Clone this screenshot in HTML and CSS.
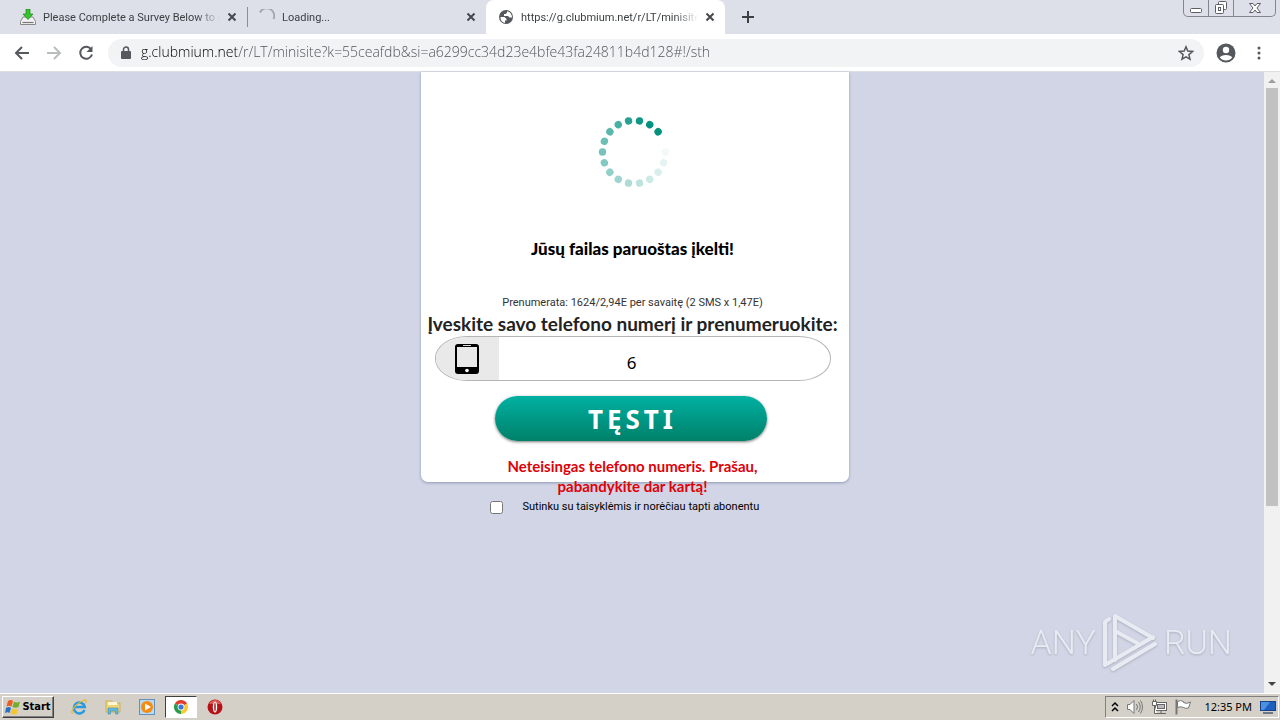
FILE: index.html
```html
<!DOCTYPE html>
<html lang="lt">
  <head>
    <meta charset="UTF-8" />
    <meta name="viewport" content="width=device-width, initial-scale=1.0" />
    <title>g.clubmium.net</title>
    <link rel="stylesheet" href="styles.css">
  </head>
  <body>
    <!-- tabs -->
    <header class="tab-strip">
      <div class="tab">
        <svg class="favicon" viewBox="0 0 16 16">
          <path d="M3 8h10l2.500 4.500v3H.500v-3z" fill="#f1f1f1" stroke="#888" />
          <path d="M2.500 13.500h11" stroke="#777" stroke-width="1.200" />
          <path d="M6 0h4v5h3l-5 5.500L3 5h3z" fill="#35c52d" stroke="#168512" stroke-width=".7" />
        </svg>
        <a class="tab-title" href="#survey">Please Complete a Survey Below to C</a>
        <button class="tab-close" aria-label="Close tab"><svg viewBox="0 0 10 10"><path d="M1.500 1.500l7 7m0-7l-7 7" /></svg></button>
      </div>
      <div class="tab divided">
        <svg class="favicon" viewBox="0 0 16 16"><path d="M1 3.500A7 7 0 0 1 14.500 10" fill="none" stroke="#a3a5a9" stroke-width="1.800" /></svg>
        <a class="tab-title" href="#loading">Loading...</a>
        <button class="tab-close" aria-label="Close tab"><svg viewBox="0 0 10 10"><path d="M1.500 1.500l7 7m0-7l-7 7" /></svg></button>
      </div>
      <div class="tab active">
        <svg class="favicon" viewBox="0 0 16 16">
          <circle cx="8" cy="8" r="7" fill="#55585d" />
          <path d="M2.500 8h4l2 2v1.500H7V14C4 13.500 2.300 11 2.500 8zM9 2.200v1.600L7.500 5H6v2h4l1.500 1.500H14C14 5 12 2.800 9 2.200z" fill="#fff" />
        </svg>
        <a class="tab-title" href="#minisite">https://g.clubmium.net/r/LT/minisite?</a>
        <button class="tab-close" aria-label="Close tab"><svg viewBox="0 0 10 10"><path d="M1.500 1.500l7 7m0-7l-7 7" /></svg></button>
      </div>
      <button class="new-tab" aria-label="New tab"><svg viewBox="0 0 12 12"><path d="M6 0v12M0 6h12" /></svg></button>
      <div class="window-buttons">
        <button aria-label="Minimize"><svg width="14" height="14" viewBox="0 0 14 14"><rect x="1.500" y="7.500" width="11" height="4" rx="1" /></svg></button>
        <button aria-label="Restore"><svg width="14" height="14" viewBox="0 0 14 14"><rect x="4.500" y=".5" width="8" height="8" rx="1" /><rect x="1.500" y="3.500" width="8" height="9" rx="1" /><rect x="4.500" y="6.500" width="2" height="3" /></svg></button>
        <button class="wide" aria-label="Close"><svg width="14" height="14" viewBox="0 0 14 14"><path d="M1.500 2.500h3.500l2 2.500 2-2.500h3.500L9 7l3.500 4.500H9L7 9l-2 2.500H1.500L5 7z" /></svg></button>
      </div>
    </header>

    <!-- toolbar -->
    <nav class="toolbar">
      <button class="nav-button" aria-label="Back"><svg viewBox="0 0 16 16"><path d="M15 8H2m6-6L2 8l6 6" /></svg></button>
      <button class="nav-button disabled" aria-label="Forward" disabled><svg viewBox="0 0 16 16"><path d="M1 8h13M8 2l6 6-6 6" /></svg></button>
      <button class="nav-button" aria-label="Reload"><svg viewBox="0 0 16 16"><path d="M13.300 4.500A6 6 0 1 0 14 9.500" /><path d="M14.500 1v6h-6z" fill="#55585d" stroke="none" /></svg></button>
      <div class="address-bar">
        <svg class="lock" viewBox="0 0 10 13"><path d="M2.500 6V3.500a2.500 2.500 0 0 1 5 0V6" fill="none" stroke="#55585d" stroke-width="1.500" /><rect y="5" width="10" height="8" rx="1" fill="#55585d" /></svg>
        <input class="url" type="text" aria-label="Address" value="g.clubmium.net/r/LT/minisite?k=55ceafdb&amp;si=a6299cc34d23e4bfe43fa24811b4d128#!/sth">
        <button class="star" aria-label="Bookmark"><svg viewBox="0 0 16 16"><path d="M8 1.800l1.800 4.300 4.700.4-3.600 3.100 1.100 4.600L8 11.800l-4 2.400 1.100-4.600L1.500 6.500l4.700-.4z" /></svg></button>
      </div>
      <button class="profile" aria-label="Profile">
        <svg viewBox="0 0 20 20"><circle cx="10" cy="10" r="9.500" fill="#55585d" /><circle cx="10" cy="7" r="3.200" fill="#fff" /><path d="M3.800 14.500C5 11 15 11 16.200 14.500 13.500 18.500 6.500 18.500 3.800 14.500z" fill="#fff" /></svg>
      </button>
      <button class="more" aria-label="Menu"><svg viewBox="0 0 4 14"><circle cx="2" cy="2" r="1.500" /><circle cx="2" cy="7" r="1.500" /><circle cx="2" cy="12" r="1.500" /></svg></button>
    </nav>

    <div class="viewport">
      <main class="page">
        <form class="subscribe">
          <div class="card">
            <svg class="spinner" viewBox="-36 -36 72 72" fill="#00917f">
              <circle r="3.700" cx="31.500" transform="rotate(-40)" />
              <circle r="3.700" cx="31.500" transform="rotate(-60)" />
              <circle r="3.700" cx="31.500" transform="rotate(-80)" opacity=".94" />
              <circle r="3.700" cx="31.500" transform="rotate(-100)" opacity=".85" />
              <circle r="3.700" cx="31.500" transform="rotate(-120)" opacity=".72" />
              <circle r="3.700" cx="31.500" transform="rotate(-140)" opacity=".65" />
              <circle r="3.700" cx="31.500" transform="rotate(-160)" opacity=".58" />
              <circle r="3.700" cx="31.500" transform="rotate(180)" opacity=".54" />
              <circle r="3.700" cx="31.500" transform="rotate(160)" opacity=".49" />
              <circle r="3.700" cx="31.500" transform="rotate(140)" opacity=".43" />
              <circle r="3.700" cx="31.500" transform="rotate(120)" opacity=".38" />
              <circle r="3.700" cx="31.500" transform="rotate(100)" opacity=".32" />
              <circle r="3.700" cx="31.500" transform="rotate(80)" opacity=".26" />
              <circle r="3.700" cx="31.500" transform="rotate(60)" opacity=".2" />
              <circle r="3.700" cx="31.500" transform="rotate(40)" opacity=".15" />
              <circle r="3.700" cx="31.500" transform="rotate(20)" opacity=".1" />
              <circle r="3.700" cx="31.500" opacity=".05" />
            </svg>
            <h1>Jūsų failas paruoštas įkelti!</h1>
            <p class="price">Prenumerata: 1624/2,94E per savaitę (2 SMS x 1,47E)</p>
            <label class="phone-label" for="phone">Įveskite savo telefono numerį ir prenumeruokite:</label>
            <div class="phone-field">
              <span class="phone-icon">
                <svg viewBox="0 0 26 32"><rect x="1" y="1" width="24" height="30" rx="3" fill="#000" /><rect x="3" y="4" width="20" height="20" fill="#e9e9e9" /><path d="M9 2.500h8" stroke="#ddd" /><circle cx="13" cy="27.500" r="1.800" fill="#fff" /></svg>
              </span>
              <input id="phone" type="tel" value="6">
            </div>
            <button class="continue" type="button">TĘSTI</button>
            <p class="error">Neteisingas telefono numeris. Prašau, pabandykite dar kartą!</p>
          </div>
          <div class="agree">
            <input type="checkbox" id="agree">
            <label for="agree">Sutinku su taisyklėmis ir norėčiau tapti abonentu</label>
          </div>
        </form>
        <div class="watermark">
          <span>ANY</span>
          <svg viewBox="0 0 58 62"><path d="M8 8L4 11v43l48-28M14 5v44M14 5l38 22M14 20l22 12M12 58l42-25" /></svg>
          <span>RUN</span>
        </div>
      </main>
      <div class="scrollbar">
        <svg viewBox="0 0 16 16"><path d="M4 11l4-4 4 4z" fill="#9d9d9d" /></svg>
        <div class="track"><div class="thumb"></div></div>
        <svg viewBox="0 0 16 16"><path d="M4 5l4 4 4-4z" fill="#444" /></svg>
      </div>
    </div>

    <!-- taskbar -->
    <footer class="taskbar">
      <button class="start">
        <svg viewBox="0 0 16 16"><path d="M3 2q3-2 5 0L6.500 7.500Q4 6 1.500 7.500z" fill="#ee5b23" /><path d="M9 2.500q3 2 6 0l-1.500 5.500q-3 1.500-6 0z" fill="#75ad2a" /><path d="M1 9q3-2 5 0L4.500 14Q2.500 12.500 0 14z" fill="#2671c8" /><path d="M7 9.500q3 2 6 0L11.500 15q-3 1-6-.5z" fill="#f6c42c" /></svg>
        Start
      </button>
      <button class="task" aria-label="Internet Explorer"><svg viewBox="0 0 16 16"><path d="M13.500 11A5.500 5.500 0 1 1 13.800 8H4" fill="none" stroke="#2a9ae0" stroke-width="2.500" /><path d="M2 14.500C-2 14 5 4 13 1.200c3-.8 2.500 1.300 1.500 3" fill="none" stroke="#e8b82a" stroke-width="1.200" /></svg></button>
      <button class="task" aria-label="Explorer"><svg viewBox="0 0 16 16"><path d="M1 2h6l1 2h7v9H1z" fill="#f0d478" stroke="#c9a441" stroke-width=".7" /><path d="M3 3h9v3H3z" fill="#fff8d8" /><path d="M3 15V9h10v6h-2.500v-3h-5v3z" fill="#62b9df" stroke="#3e8eb4" stroke-width=".6" /></svg></button>
      <button class="task" aria-label="Media Player"><svg viewBox="0 0 16 16"><rect x=".5" y=".5" width="15" height="15" fill="#b9d9f1" stroke="#6592bd" /><circle cx="8" cy="8" r="6" fill="#f58b10" /><path d="M6 4.500l6 3.500-6 3.500z" fill="#fff" /></svg></button>
      <button class="task pressed" aria-label="Chrome"><svg viewBox="0 0 16 16"><path d="M8 8L1.900 4.500A7 7 0 0 1 14.100 4.500z" fill="#e33b2e" /><path d="M8 8l6.100-3.500A7 7 0 0 1 8 15z" fill="#fcc934" /><path d="M8 8v7A7 7 0 0 1 1.900 4.500z" fill="#2b9b4b" /><circle cx="8" cy="8" r="3.400" fill="#fff" /><circle cx="8" cy="8" r="2.600" fill="#3878dc" /></svg></button>
      <button class="task" aria-label="Opera"><svg viewBox="0 0 16 16"><circle cx="8" cy="8" r="7.500" fill="#b51218" /><path d="M2 5a6.500 6.500 0 0 1 12 0z" fill="#dc5551" /><ellipse cx="8" cy="8" rx="2.200" ry="5.500" fill="#fff" /><ellipse cx="8" cy="8" rx=".7" ry="4.500" fill="#8d0b10" /></svg></button>
      <div class="tray">
        <svg class="chevrons" viewBox="0 0 8 12"><path d="M1 5l3-3 3 3M1 10l3-3 3 3" /></svg>
        <svg viewBox="0 0 16 16" fill="#fff" stroke="#777"><path d="M.5 5.500H3L7 1.500v13L3 10.500H.500z" /><path d="M9.500 5q2 3 0 6M11.500 3q3.500 5 0 10M13.500 1.500q4 6.500 0 13" fill="none" /></svg>
        <svg viewBox="0 0 16 16" fill="#fff" stroke="#666"><rect x="4.500" y="3.500" width="11" height="8" /><rect x="6.500" y="5.500" width="7" height="4" fill="#bbb" /><path d="M6 14.500h9M10 12v2" /><path d="M1.500 2.500h4v4h-4zM3.500 6.500v8H6M2.500.5v2M4.500.5v2" /></svg>
        <svg viewBox="0 0 16 16" fill="#fff" stroke="#777"><path d="M2.500 2.500q3-2 6 0v1q3 2 7-.5l-2 6q-3 1-5-.5-3-1.500-6 0z" /><path d="M1.500.5v15" stroke-width="2" /></svg>
        <time>12:35 PM</time>
        <svg viewBox="0 0 16 16"><rect x=".5" y="2.500" width="15" height="9" fill="#1f5fc0" stroke="#15408b" /><path d="M1 3h9L4 11H1z" fill="#4b91e2" /><path d="M3 14h10" stroke="#6d7785" stroke-width="2" /></svg>
      </div>
    </footer>
  </body>
</html>
```

FILE: styles.css
```css
* {
  box-sizing: border-box;
}
body {
  font-family: Roboto, "Noto Sans", sans-serif;
  margin: 0;
  display: flex;
  flex-direction: column;
  height: 100vh;
  overflow: hidden;
  color: #000;
}
button {
  display: flex;
  align-items: center;
  justify-content: center;
  padding: 0;
  border: none;
  background: none;
  font-family: inherit;
}
svg {
  flex-shrink: 0;
}

/* tabs */
.tab-strip {
  display: flex;
  flex: none;
  height: 34px;
  padding-left: 8px;
  background-color: #dde0e8;
}
.tab {
  display: flex;
  align-items: center;
  width: 239px;
  padding: 0 7px 0 12px;
}
.tab.divided {
  background: linear-gradient(#8b8e94, #8b8e94) 0 50% / 1px 20px no-repeat;
}
.tab.active {
  background-color: #fff;
  border-radius: 8px 8px 0 0;
}
.favicon {
  width: 16px;
  height: 16px;
}
.tab-title {
  flex: 1;
  min-width: 0;
  margin: 0 4px 0 7px;
  overflow: hidden;
  white-space: nowrap;
  color: #3c4043;
  font-size: 11px;
  text-decoration: none;
  -webkit-mask-image: linear-gradient(to left, transparent, #000 24px);
}
.tab-close {
  width: 16px;
  height: 16px;
}
.tab-close svg {
  width: 10px;
  height: 10px;
}
.tab-close path {
  stroke: #45484d;
  stroke-width: 2;
}
.new-tab {
  width: 46px;
}
.new-tab svg {
  width: 12px;
  height: 12px;
}
.new-tab path {
  stroke: #3c4043;
  stroke-width: 2;
}
.window-buttons {
  display: flex;
  height: 17px;
  margin-left: auto;
  margin-right: 4px;
  border: 1px solid #83868d;
  border-top: none;
  border-radius: 0 0 5px 5px;
}
.window-buttons button {
  width: 25px;
  border-right: 1px solid #83868d;
}
.window-buttons .wide {
  width: 41px;
  border-right: none;
}
.window-buttons svg {
  fill: #fff;
  stroke: #5b5e66;
}

/* toolbar */
.toolbar {
  display: flex;
  flex: none;
  align-items: center;
  height: 38px;
  padding: 0 12px 0 6px;
  background-color: #fff;
  border-bottom: 1px solid #dcdee2;
}
.nav-button {
  width: 32px;
  height: 32px;
}
.nav-button svg {
  width: 16px;
  height: 16px;
  fill: none;
  stroke: #55585d;
  stroke-width: 2;
}
.nav-button.disabled svg {
  stroke: #babcbe;
}
.address-bar {
  display: flex;
  flex: 1;
  align-items: center;
  height: 28px;
  margin-left: 6px;
  padding: 0 10px 0 13px;
  background-color: #f1f3f4;
  border-radius: 14px;
}
.lock {
  width: 10px;
  height: 13px;
}
.url {
  flex: 1;
  min-width: 0;
  margin-left: 10px;
  padding: 0 0 2px;
  border: none;
  outline: none;
  font-family: "Open Sans", sans-serif;
  font-size: 14px;
  font-weight: 300;
  line-height: 20px;
  /* host is darker than the rest of the address */
  background: linear-gradient(to right, #000 96px, #4b4f54 96px);
  -webkit-background-clip: text;
  background-clip: text;
  -webkit-text-fill-color: transparent;
}
.star svg {
  width: 16px;
  height: 16px;
  fill: none;
  stroke: #55585d;
  stroke-width: 1.5;
}
.profile {
  margin-left: 12px;
}
.profile svg {
  width: 20px;
  height: 20px;
}
.more {
  width: 18px;
  margin-left: 14px;
}
.more svg {
  width: 4px;
  height: 14px;
  fill: #55585d;
}

/* page */
.viewport {
  display: flex;
  flex: 1;
  min-height: 0;
}
.page {
  position: relative;
  flex: 1;
  display: flex;
  justify-content: center;
  padding-left: 5px;
  background-color: #d1d5e5;
}
.subscribe {
  width: 428px;
}
.card {
  display: flex;
  flex-direction: column;
  align-items: center;
  padding: 44px 4px 0 0;
  background-color: #fff;
  border-radius: 0 0 7px 7px;
  box-shadow: 0 1px 3px #8f98b5;
  text-align: center;
}
.spinner {
  width: 72px;
  height: 72px;
  margin-left: 3px;
}
h1 {
  margin: 49px 0 0;
  font-family: Lato, sans-serif;
  font-size: 17px;
  font-weight: 900;
  line-height: 24px;
}
.price {
  margin: 32px 0 0;
  font-size: 11px;
  line-height: 20px;
  color: #333;
}
.phone-label {
  font-family: Lato, sans-serif;
  font-size: 19px;
  font-weight: bold;
  line-height: 22px;
  white-space: nowrap;
  color: #222;
}
.phone-field {
  display: flex;
  width: 396px;
  height: 45px;
  margin-top: 1px;
  overflow: hidden;
  background-color: #fff;
  border: 1px solid #b5b5b5;
  border-radius: 32px / 22px;
}
.phone-icon {
  display: flex;
  align-items: center;
  justify-content: center;
  width: 63px;
  background-color: #e9e9e9;
}
.phone-icon svg {
  width: 26px;
  height: 32px;
}
.phone-field input {
  flex: 1;
  min-width: 0;
  padding: 8px 65px 0 0;
  border: none;
  outline: none;
  background: none;
  font-family: "Noto Sans", sans-serif;
  font-size: 17px;
  text-align: center;
}
.continue {
  width: 272px;
  height: 45px;
  margin-top: 15px;
  margin-right: 4px;
  padding-left: 4px;
  border-radius: 23px;
  background: linear-gradient(#00b1a2, #008069);
  box-shadow: 0 1px 3px #777;
  color: #fff;
  font-family: "Noto Sans", sans-serif;
  font-size: 26px;
  font-weight: bold;
  letter-spacing: 4px;
}
.error {
  width: 280px;
  margin: 15px 0 -14px;
  font-family: Lato, sans-serif;
  font-size: 15px;
  font-weight: bold;
  line-height: 20px;
  color: #e00008;
}
.agree {
  display: flex;
  align-items: center;
  margin-top: 15px;
  padding-left: 69px;
  font-size: 11px;
  line-height: 20px;
}
.agree input {
  width: 13px;
  height: 13px;
  margin: 0 20px 0 0;
}
.watermark {
  position: absolute;
  right: 32px;
  bottom: 20px;
  display: flex;
  align-items: center;
  gap: 5px;
  color: #e9ebf3;
  font-size: 34px;
  font-weight: 300;
  filter: drop-shadow(0 1px 1px #a9adbb);
}
.watermark svg {
  width: 58px;
  height: 62px;
  fill: none;
  stroke: #e9ebf3;
  stroke-width: 4;
  stroke-linecap: round;
  stroke-linejoin: round;
}
.scrollbar {
  display: flex;
  flex-direction: column;
  width: 16px;
  background-color: #f1f1f1;
}
.scrollbar svg {
  width: 16px;
  height: 16px;
}
.track {
  flex: 1;
  padding: 0 2px;
}
.thumb {
  height: 71%;
  background-color: #c1c1c1;
}

/* taskbar */
.taskbar {
  display: flex;
  flex: none;
  align-items: center;
  height: 27px;
  padding: 0 1px 1px 2px;
  background-color: #d4d0c8;
  border-top: 1px solid #fff;
  font-family: "Noto Sans", sans-serif;
  font-size: 11px;
}
.start {
  width: 52px;
  height: 22px;
  margin-right: 10px;
  gap: 1px;
  border: 1px solid;
  border-color: #fff #404040 #404040 #fff;
  box-shadow: inset -1px -1px #808080;
  font-family: "DejaVu Sans Condensed", sans-serif;
  font-size: 11px;
  font-weight: bold;
}
.taskbar svg {
  width: 16px;
  height: 16px;
}
.task {
  width: 32px;
  height: 22px;
  margin-right: 2px;
}
.start + .task {
  margin-left: -1px;
}
.task.pressed {
  background-color: #fff;
  border: 1px solid;
  border-color: #404040 #fff #fff #404040;
}
.tray {
  display: flex;
  align-items: center;
  height: 22px;
  margin-left: auto;
  padding: 0 2px 0 5px;
  gap: 8px;
  border: 1px solid;
  border-color: #808080 #fff #fff #808080;
}
.taskbar .chevrons {
  width: 8px;
  height: 12px;
  fill: none;
  stroke: #000;
  stroke-width: 1.5;
}
.tray time {
  margin-left: 5px;
}
```
